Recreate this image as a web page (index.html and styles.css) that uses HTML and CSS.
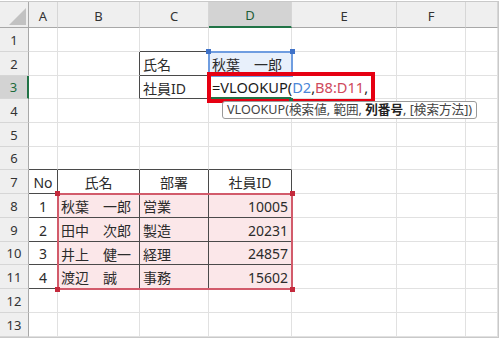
FILE: index.html
```html
<!DOCTYPE html>
<html lang="ja">
<head>
<meta charset="utf-8">
<title>VLOOKUP</title>
<link rel="stylesheet" href="styles.css">
</head>
<body>
<div class="frame">
  <div class="sheet">
    <div class="corner"><span class="tri"></span></div>
    <div class="ch">A</div>
    <div class="ch">B</div>
    <div class="ch">C</div>
    <div class="ch sel">D</div>
    <div class="ch">E</div>
    <div class="ch">F</div>
    <div class="ch"></div>

    <div class="rh">1</div>
    <div class="c"></div><div class="c"></div><div class="c kb"></div><div class="c"></div><div class="c"></div><div class="c"></div><div class="c"></div>

    <div class="rh">2</div>
    <div class="c"></div><div class="c kr"></div><div class="c k">氏名</div><div class="c blue">秋葉　一郎</div><div class="c"></div><div class="c"></div><div class="c"></div>

    <div class="rh sel">3</div>
    <div class="c"></div><div class="c kr"></div><div class="c k">社員ID</div>
    <div class="c active"><span class="fx">=VLOOKUP(<span class="rb">D2</span>,<span class="rr">B8:D11</span>,</span><span class="caret"></span></div>
    <div class="c"></div><div class="c"></div><div class="c"></div>

    <div class="rh">4</div>
    <div class="c"></div><div class="c"></div><div class="c"></div><div class="c"></div><div class="c"></div><div class="c"></div><div class="c"></div>

    <div class="rh">5</div>
    <div class="c"></div><div class="c"></div><div class="c"></div><div class="c"></div><div class="c"></div><div class="c"></div><div class="c"></div>

    <div class="rh">6</div>
    <div class="c kb"></div><div class="c kb"></div><div class="c kb"></div><div class="c kb"></div><div class="c"></div><div class="c"></div><div class="c"></div>

    <div class="rh">7</div>
    <div class="c k ctr">No</div><div class="c k ctr">氏名</div><div class="c k ctr">部署</div><div class="c k ctr">社員ID</div><div class="c"></div><div class="c"></div><div class="c"></div>

    <div class="rh">8</div>
    <div class="c k ctr">1</div><div class="c k pk">秋葉　一郎</div><div class="c k pk">営業</div><div class="c k pk num">10005</div><div class="c"></div><div class="c"></div><div class="c"></div>

    <div class="rh">9</div>
    <div class="c k ctr">2</div><div class="c k pk">田中　次郎</div><div class="c k pk">製造</div><div class="c k pk num">20231</div><div class="c"></div><div class="c"></div><div class="c"></div>

    <div class="rh">10</div>
    <div class="c k ctr">3</div><div class="c k pk">井上　健一</div><div class="c k pk">経理</div><div class="c k pk num">24857</div><div class="c"></div><div class="c"></div><div class="c"></div>

    <div class="rh">11</div>
    <div class="c k ctr">4</div><div class="c k pk">渡辺　誠</div><div class="c k pk">事務</div><div class="c k pk num">15602</div><div class="c"></div><div class="c"></div><div class="c"></div>

    <div class="rh">12</div>
    <div class="c"></div><div class="c"></div><div class="c"></div><div class="c"></div><div class="c"></div><div class="c"></div><div class="c"></div>

    <div class="rh">13</div>
    <div class="c"></div><div class="c"></div><div class="c"></div><div class="c"></div><div class="c"></div><div class="c"></div><div class="c"></div>

    <div class="range-blue"><i class="h tl"></i><i class="h tr"></i></div>
    <div class="range-red"><i class="h tl"></i><i class="h tr"></i><i class="h bl"></i><i class="h br"></i></div>
    <div class="annot"></div>
    <div class="fill-handle"></div>
    <div class="tip">VLOOKUP(検索値, 範囲, <b>列番号</b>, [検索方法])</div>
  </div>
</div>
</body>
</html>
```

FILE: styles.css
```css
* { box-sizing: border-box; }
html, body { margin: 0; padding: 0; background: #fff; }
body {
  width: 500px;
  height: 340px;
  overflow: hidden;
  font-family: "Noto Sans", "Noto Sans CJK JP", sans-serif;
  color: #2b2b2b;
}
.frame {
  margin-top: 1px;
  width: 499px;
  border: 1px solid #c9c9c9;
  border-left: 0;
}
.sheet {
  position: relative;
  display: grid;
  grid-template-columns: 29px 29px 82px 69px 83px 105px 69px 32px;
  grid-template-rows: 26px 24px 24px 23px 24px 24px 23px 24px 24px 24px 23px 24px 24px 24px;
  overflow: hidden;
}
.corner {
  background: #efefef;
  border-right: 1px solid #a8a8a8;
  border-bottom: 1px solid #a8a8a8;
  display: flex;
  align-items: flex-end;
  justify-content: flex-end;
  padding: 0 2px 2px 0;
}
.tri {
  width: 17px;
  height: 17px;
  background: #c2c2c2;
  clip-path: polygon(100% 0, 100% 100%, 0 100%);
}
.ch {
  background: #efefef;
  border-right: 1px solid #d6d6d6;
  border-bottom: 1px solid #a8a8a8;
  display: flex;
  align-items: center;
  justify-content: center;
  font-size: 13px;
  color: #333;
  padding-top: 2px;
}
.ch.sel {
  background: #d3d3d3;
  border-bottom: 2px solid #217346;
  color: #1d5e37;
}
.rh {
  background: #efefef;
  border-right: 1px solid #a8a8a8;
  border-bottom: 1px solid #d6d6d6;
  display: flex;
  align-items: center;
  justify-content: center;
  font-size: 13px;
  color: #333;
}
.rh.sel {
  background: #d3d3d3;
  border-right: 2px solid #217346;
  color: #1d6b3c;
}
.c {
  border-right: 1px solid #e1e1e1;
  border-bottom: 1px solid #e1e1e1;
  display: flex;
  align-items: center;
  padding: 1px 3px 0;
  font-size: 14px;
  white-space: nowrap;
  min-width: 0;
}
.kr { border-right-color: #4a4a4a; }
.kb { border-bottom-color: #4a4a4a; }
.k { border-right-color: #4a4a4a; border-bottom-color: #4a4a4a; }
.ctr { justify-content: center; }
.num { justify-content: flex-end; }
.pk { background: #fbe7e9; }
.blue { background: #e8f0fb; }
.active {
  border-right-color: transparent;
  border-bottom: 2px solid #217346;
  overflow: visible;
  position: relative;
  z-index: 1;
  font-size: 14.6px;
}
.fx { color: #1a1a1a; }
.rb { color: #4a86d8; }
.rr { color: #cf4a5c; }
.caret {
  display: inline-block;
  width: 1px;
  height: 17px;
  background: #000;
  margin-left: 1px;
}
.range-blue {
  position: absolute;
  grid-row: 3 / 4;
  grid-column: 5 / 6;
  top: -1px;
  left: -1px;
  right: -1px;
  bottom: -1px;
  border: 2px solid #6f9de0;
  z-index: 2;
}
.range-red {
  position: absolute;
  grid-row: 9 / 13;
  grid-column: 3 / 6;
  top: -1px;
  left: -1px;
  right: -1px;
  bottom: -1px;
  border: 2px solid #d25b6b;
  z-index: 2;
}
.h {
  position: absolute;
  width: 5px;
  height: 5px;
}
.range-blue .h { background: #3f72c8; }
.range-red .h { background: #c42a3c; }
.h.tl { left: -4px; top: -4px; }
.h.tr { right: -4px; top: -4px; }
.h.bl { left: -4px; bottom: -4px; }
.h.br { right: -4px; bottom: -4px; }
.annot {
  position: absolute;
  grid-row: 4 / 5;
  grid-column: 5 / 7;
  top: -4px;
  left: -2px;
  width: 168px;
  height: 31px;
  border: 4px solid #e60012;
  z-index: 3;
}
.fill-handle {
  position: absolute;
  grid-row: 4 / 5;
  grid-column: 5 / 6;
  right: -1px;
  bottom: -3px;
  width: 4px;
  height: 4px;
  background: #217346;
  z-index: 4;
}
.tip {
  position: absolute;
  grid-row: 5 / 6;
  grid-column: 5 / 9;
  top: 2px;
  left: 13px;
  height: 18px;
  padding: 0 4px;
  border: 1px solid #9a9a9a;
  border-radius: 3px;
  background: #fff;
  font-size: 12.6px;
  line-height: 16px;
  color: #444;
  white-space: nowrap;
  z-index: 5;
}
.tip b { color: #222; }
```
